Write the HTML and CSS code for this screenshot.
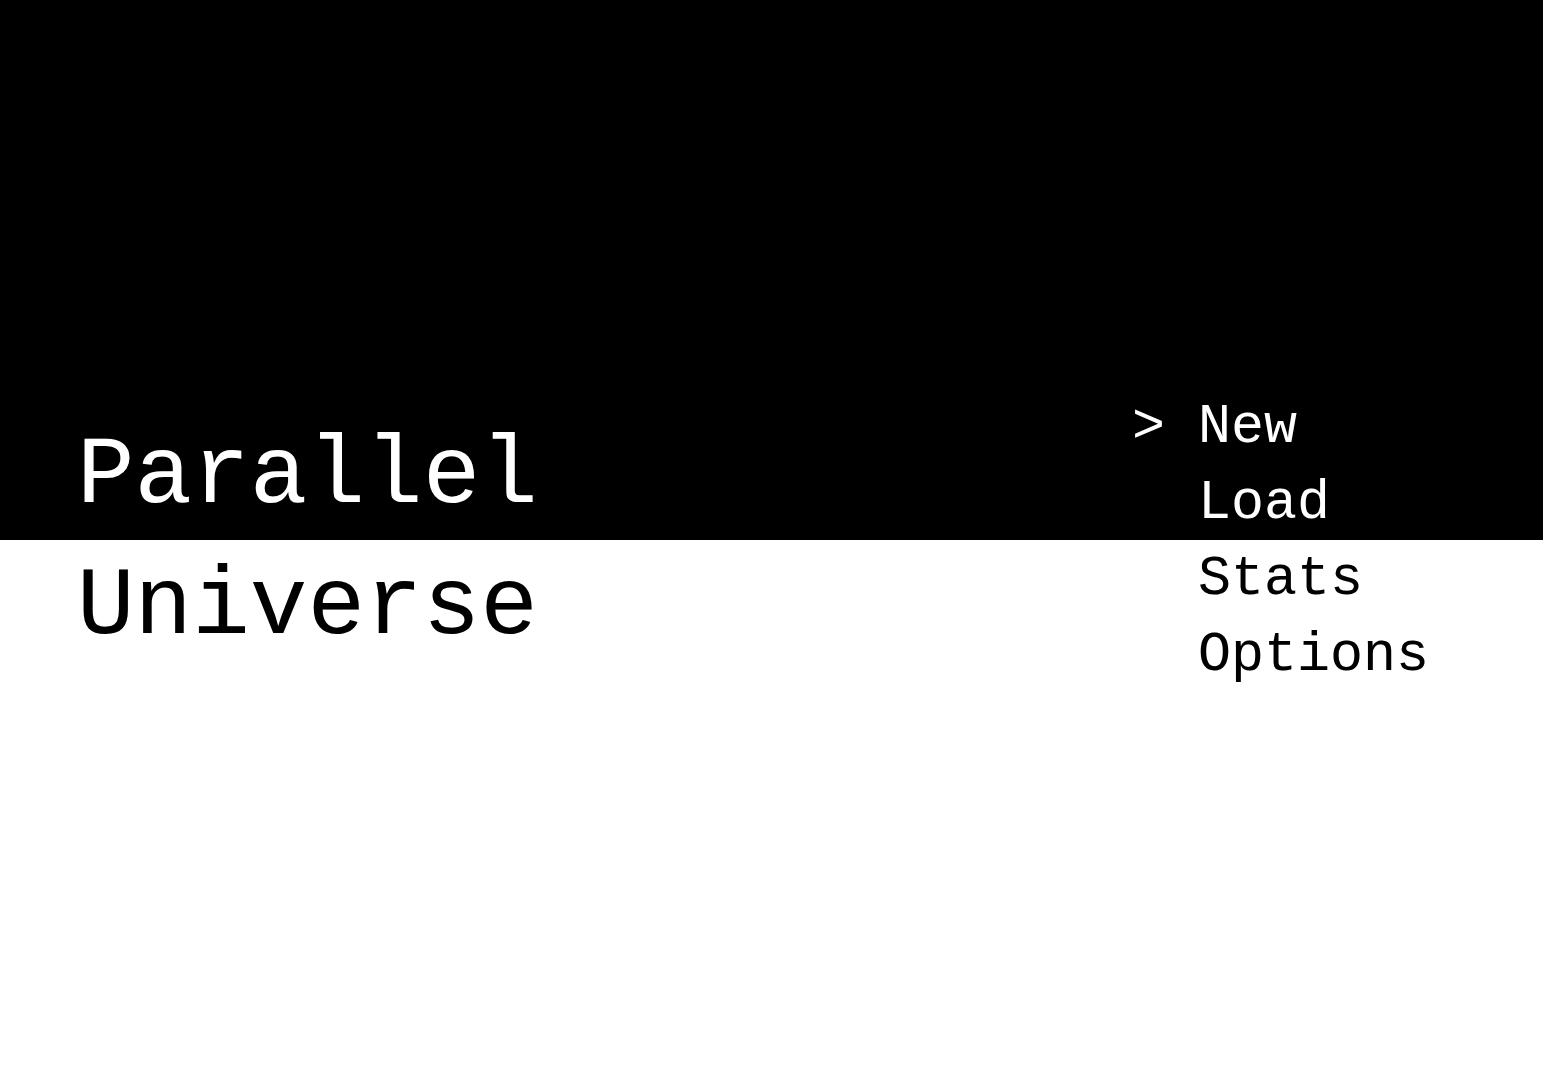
FILE: index.html
```html
<!DOCTYPE html>
<html lang="en">
<head>
<meta charset="utf-8">
<title>Parallel Universe</title>
<link rel="stylesheet" href="styles.css">
</head>
<body>
<main class="screen">
  <h1 class="title">
    <span class="title-line">Parallel</span>
    <span class="title-line">Universe</span>
  </h1>
  <ul class="menu">
    <li class="menu-item selected"><span class="cursor">&gt;</span> New</li>
    <li class="menu-item"><span class="cursor"> </span> Load</li>
    <li class="menu-item"><span class="cursor"> </span> Stats</li>
    <li class="menu-item"><span class="cursor"> </span> Options</li>
  </ul>
</main>
</body>
</html>
```

FILE: styles.css
```css
html, body {
  margin: 0;
  padding: 0;
  height: 100%;
}
body {
  background: linear-gradient(to bottom, #000 0, #000 50%, #fff 50%, #fff 100%);
  font-family: "Liberation Mono", "DejaVu Sans Mono", monospace;
  overflow: hidden;
}
.screen {
  height: 100vh;
  box-sizing: border-box;
  display: flex;
  align-items: center;
  justify-content: space-between;
  padding: 3px 114px 0 77px;
}
.title {
  margin: 0;
  font-size: 96px;
  font-weight: normal;
  line-height: 131px;
  color: #fff;
  mix-blend-mode: difference;
  display: flex;
  flex-direction: column;
}
.menu {
  margin: 0;
  padding: 0;
  list-style: none;
  font-size: 55px;
  line-height: 76px;
  color: #fff;
  mix-blend-mode: difference;
}
.menu-item {
  white-space: pre;
}
```
